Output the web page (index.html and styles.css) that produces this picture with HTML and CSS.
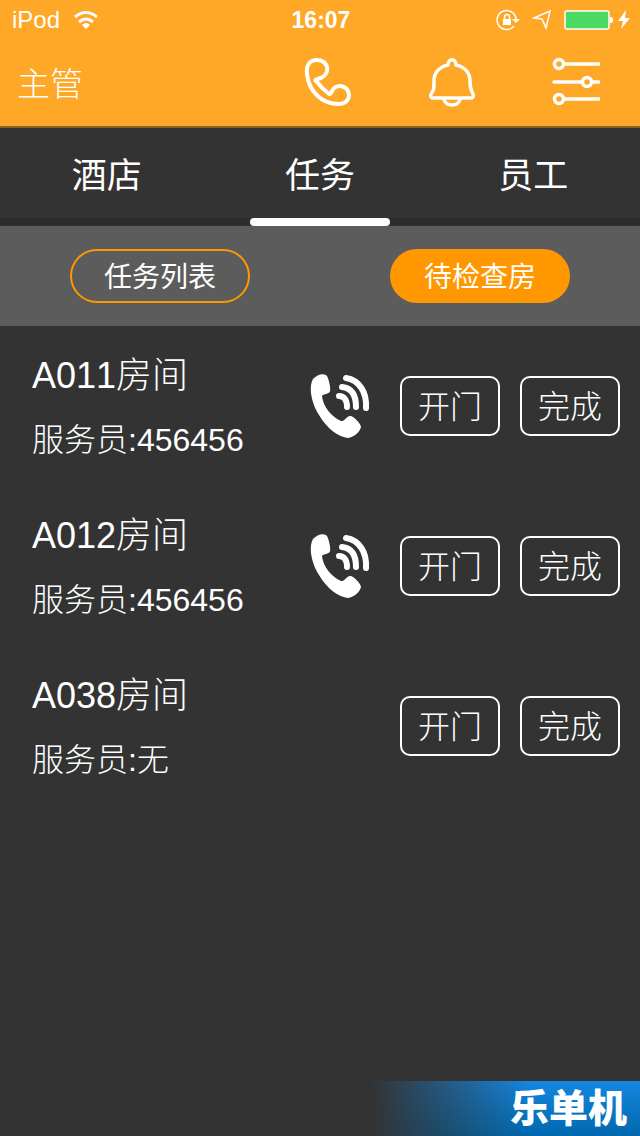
FILE: index.html
```
<!DOCTYPE html>
<html lang="zh-CN">
<head>
<meta charset="utf-8">
<meta name="viewport" content="width=device-width, initial-scale=1">
<title>主管</title>
<link rel="stylesheet" href="styles.css">
</head>
<body>
<svg class="defs" aria-hidden="true">
  <symbol id="call" viewBox="0 0 60 64">
    <path fill="#fff" d="M3 5C7 1 12-1 16 1C18 2 21 13 20 17C20 20 13 20 12 22C13 33 22 43 31 47C34 48 37 42 40 42C44 42 51 50 51 53C50 58 44 63 38 64C29 63 17 55 9 41C2 30-2 14 3 5Z"/>
    <g fill="none" stroke="#fff" stroke-width="6" stroke-linecap="round"><path d="M29 22C34 22 37 26 37 33"/><path d="M32 13C42 14 46 22 46 33"/><path d="M36 4C49 6 57 18 56 34"/></g>
  </symbol>
</svg>
<header class="header">
  <div class="status">
    <div class="status-left"><span>iPod</span>
      <svg class="wifi" width="26" height="20" viewBox="0 0 26 20"><g fill="none" stroke="#fff" stroke-width="3"><path d="M2 7Q13-2 24 7"/><path d="M6 12Q13 6 20 12"/></g><path fill="#fff" d="M9 15Q13 11 17 15L13 19Z"/></svg>
    </div>
    <strong class="clock">16:07</strong>
    <div class="status-right">
      <svg width="24" height="22" viewBox="0 0 24 22"><path fill="none" stroke="#fff" stroke-width="1.500" d="M18 17A9.500 9.500 0 1 1 20 10"/><path fill="#fff" d="M16 10H24L20 14ZM7 10H15V16H7Z"/><path fill="none" stroke="#fff" stroke-width="1.500" d="M8.500 10V8a2.500 2.500 0 0 1 5 0v2"/></svg>
      <svg class="locate" width="20" height="20" viewBox="0 0 20 20"><path fill="none" stroke="#fff" stroke-width="1.500" stroke-linejoin="miter" d="M2 8L18 1L14 18L10 9Z"/></svg>
      <svg class="battery" width="50" height="20" viewBox="0 0 50 20"><rect x="1" y="1" width="44" height="18" rx="2" fill="#4cd964" stroke="#fff" stroke-width="1.500"/><path fill="#fff" d="M46 7h1q2 0 2 3t-2 3h-1z"/></svg>
      <svg width="12" height="20" viewBox="0 0 12 20"><path fill="#fff" d="M8 0L0 11H5L3 19L12 8H7Z"/></svg>
    </div>
  </div>
  <div class="nav">
    <h1 class="title">主管</h1>
    <button class="icon" aria-label="电话"><svg viewBox="0 0 48 50"><path fill="none" stroke="#fff" stroke-width="4" stroke-linejoin="round" d="M13 3C5 3 2 9 3 17C5 35 18 47 35 47C41 47 45 43 45 38C44 28 32 26 28 34C27 37 26 38 24 36C20 33 16 29 12 24C11 23 12 22 14 22C28 18 25 3 13 3Z"/></svg></button>
    <button class="icon" aria-label="通知"><svg viewBox="0 0 48 50"><g fill="none" stroke="#fff" stroke-width="3.500" stroke-linejoin="round"><path d="M20 8C20 1 28 1 28 8C37 10 42 16 42 24C42 32 43 33 45 37C46 39 45 41 43 41H5C3 41 2 39 3 37C6 33 6 32 6 24C6 16 11 10 20 8Z"/><path d="M16 42C17 50 31 50 32 42"/></g></svg></button>
    <button class="icon" aria-label="设置"><svg viewBox="0 0 48 50"><g fill="none" stroke="#fff" stroke-width="3.500"><circle cx="7" cy="7" r="4.500"/><path d="M12 7H47M2 25H30M40 25H47M12 42H47" stroke-linecap="round"/><circle cx="35" cy="25" r="4.500"/><circle cx="7" cy="42" r="4.500"/></g></svg></button>
  </div>
</header>
<nav class="tabs">
  <button class="tab">酒店</button>
  <button class="tab active">任务</button>
  <button class="tab">员工</button>
</nav>
<div class="filters">
  <button class="pill">任务列表</button>
  <button class="pill selected">待检查房</button>
</div>
<main class="list">
  <article class="row">
    <div class="info"><h2 class="room">A011房间</h2><p class="staff">服务员:456456</p></div>
    <button class="call" aria-label="呼叫"><svg viewBox="0 0 60 64"><use href="#call"/></svg></button>
    <button class="action">开门</button><button class="action">完成</button>
  </article>
  <article class="row">
    <div class="info"><h2 class="room">A012房间</h2><p class="staff">服务员:456456</p></div>
    <button class="call" aria-label="呼叫"><svg viewBox="0 0 60 64"><use href="#call"/></svg></button>
    <button class="action">开门</button><button class="action">完成</button>
  </article>
  <article class="row">
    <div class="info"><h2 class="room">A038房间</h2><p class="staff">服务员:无</p></div>
    <button class="action">开门</button><button class="action">完成</button>
  </article>
</main>
<footer class="brand">乐单机</footer>
</body>
</html>
```
FILE: styles.css
```
* { box-sizing: border-box; }
body {
  margin: 0;
  min-height: 100vh;
  display: flex;
  flex-direction: column;
  background: #333;
  color: #fff;
  font-family: "Liberation Sans", "Noto Sans CJK SC", sans-serif;
  font-weight: 300;
  font-kerning: none;
}
h1, h2, p { margin: 0; font-weight: 300; }
button {
  padding: 0;
  border: 0;
  background: none;
  color: inherit;
  font: inherit;
  font-kerning: none;
}
svg { display: block; }
.defs { display: none; }
.header {
  background: #ffa726;
  border-bottom: 2px solid #8a6020;
}
.status {
  display: grid;
  grid-template-columns: 1fr auto 1fr;
  align-items: center;
  height: 40px;
  padding: 0 10px 0 12px;
  font-size: 24px;
}
.status-left, .status-right { display: flex; align-items: center; }
.status-left { gap: 13px; }
.status-right { justify-content: flex-end; gap: 4px; }
.locate { margin: 0 8px; }
.clock { font-size: 23px; font-weight: 700; }
.nav {
  display: flex;
  align-items: center;
  gap: 76px;
  height: 86px;
  padding: 0 40px 2px 17px;
}
.title { flex: 1; padding-top: 6px; font-size: 33px; line-height: 48px; }
.icon { width: 48px; height: 50px; }
.tabs {
  display: grid;
  grid-template-columns: repeat(3, 1fr);
  height: 98px;
  border-bottom: 8px solid #2c2c2c;
}
.tab {
  position: relative;
  padding-bottom: 2px;
  font-size: 35px;
  font-weight: 400;
}
.active::after {
  content: "";
  position: absolute;
  bottom: -8px;
  left: calc(50% - 70px);
  width: 140px;
  height: 8px;
  border-radius: 4px;
  background: #fff;
}
.filters {
  display: grid;
  grid-template-columns: 1fr 1fr;
  place-items: center;
  height: 100px;
  background: #5c5c5c;
}
.pill {
  width: 180px;
  height: 54px;
  padding-bottom: 2px;
  border: 2px solid #ff9800;
  border-radius: 27px;
  font-size: 28px;
  font-weight: 400;
}
.selected { background: #ff9800; }
.list { flex: 1; }
.row {
  display: flex;
  align-items: center;
  gap: 20px;
  height: 160px;
  padding: 0 20px 0 32px;
}
.info { flex: 1; padding-top: 4px; }
.room { font-size: 36px; line-height: 64px; }
.staff { font-size: 32px; line-height: 64px; }
.call { width: 60px; height: 64px; margin-right: 10px; }
.action {
  width: 100px;
  height: 60px;
  padding-bottom: 4px;
  border: 2px solid #fff;
  border-radius: 10px;
  font-size: 32px;
}
.brand {
  align-self: flex-end;
  width: 270px;
  height: 55px;
  padding-right: 13px;
  background: linear-gradient(90deg, #333, #33333300 60%), linear-gradient(#1686e0, #0068ae);
  font-size: 39px;
  font-weight: 900;
  line-height: 56px;
  text-align: right;
}
```
